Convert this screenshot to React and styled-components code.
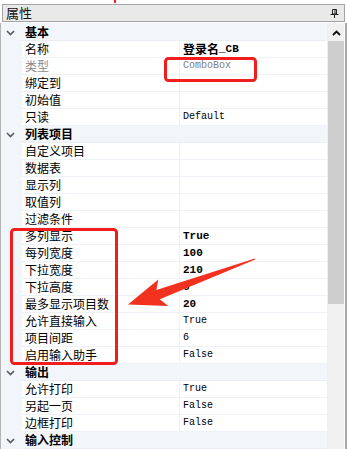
import React from "react";
import styled, { createGlobalStyle } from "styled-components";

const GlobalStyle = createGlobalStyle`
  html, body {
    margin: 0;
    padding: 0;
    background: #ffffff;
    font-family: "Noto Sans CJK SC", "Liberation Sans", sans-serif;
  }
`;

const Page = styled.div`
  position: relative;
  width: 347px;
  height: 449px;
  overflow: hidden;
  background: #ffffff;
  display: flex;
  flex-direction: column;
`;

const TopGap = styled.div`
  height: 4px;
`;

const Header = styled.div`
  box-sizing: border-box;
  height: 18px;
  margin: 0 2px;
  border: 1px solid #a3a3a3;
  background: #e9e9e9;
  display: flex;
  align-items: center;
  justify-content: space-between;
  padding: 0 5px 0 3px;
  font-size: 13px;
  line-height: 16px;
  color: #111;
`;

const Body = styled.div`
  flex: 1;
  display: flex;
  margin-top: 1px;
  border-left: 1px solid #b4b4b4;
  border-right: 2px solid #a8a8a8;
  padding-top: 1px;
  background: #f2f5fa;
`;

const Grid = styled.div`
  flex: 1;
  display: flex;
  flex-direction: column;
`;

const Row = styled.div`
  display: grid;
  grid-template-columns: 21px 158px 1fr;
  height: 17px;
  flex-shrink: 0;
  background: #f2f5fa;
`;

const Gutter = styled.div`
  display: flex;
  align-items: center;
  justify-content: center;
  padding-right: 2px;
`;

const GroupTitle = styled.div`
  grid-column: 2 / 4;
  box-sizing: border-box;
  height: 17px;
  padding-left: 3px;
  display: flex;
  align-items: center;
  font-size: 12px;
  font-weight: 700;
  line-height: 14px;
  color: #000;
  border-bottom: 1px solid #e9edf4;
`;

const Name = styled.div`
  box-sizing: border-box;
  height: 17px;
  background: #ffffff;
  padding-left: 3px;
  display: flex;
  align-items: center;
  font-size: 12px;
  line-height: 14px;
  color: ${(p) => (p.$readonly ? "#8a8a8a" : "#000")};
  border-bottom: 1px solid #eef1f6;
  border-right: 1px solid #eef1f6;
  white-space: nowrap;
`;

const Value = styled.div`
  box-sizing: border-box;
  height: 17px;
  background: #ffffff;
  padding-left: 3px;
  display: flex;
  align-items: center;
  font-family: "Liberation Mono", "Noto Sans CJK SC", monospace;
  font-size: ${(p) => (p.$bold ? "11px" : "10px")};
  font-weight: ${(p) => (p.$bold ? 700 : 400)};
  line-height: 14px;
  color: ${(p) => (p.$readonly ? "#808080" : "#000")};
  border-bottom: 1px solid #eef1f6;
  white-space: nowrap;
`;

const Cjk = styled.span`
  font-family: "Noto Sans CJK SC", sans-serif;
  font-size: 12px;
`;

const Scrollbar = styled.div`
  width: 17px;
  display: flex;
  flex-direction: column;
  background: #f0f0f0;
  border-right: 1px solid #ffffff;
`;

const ScrollUp = styled.div`
  height: 17px;
  display: flex;
  align-items: center;
  justify-content: center;
  padding-left: 1px;
`;

const Thumb = styled.div`
  height: ${(p) => p.$size}px;
  margin-left: 1px;
  background: #cdcdcd;
`;

const Overlay = styled.svg`
  position: absolute;
  left: 0;
  top: 0;
  width: 347px;
  height: 449px;
  pointer-events: none;
`;

const Chevron = () => (
  <svg width="9" height="6" viewBox="0 0 9 6">
    <path d="M1 1 L4.5 4.5 L8 1" fill="none" stroke="#5a5a5a" strokeWidth="1.6" />
  </svg>
);

const Pin = () => (
  <svg width="9" height="9" viewBox="0 0 9 9">
    <path d="M2.5 0.5 H6.5 V5 H2.5 Z" fill="none" stroke="#222" strokeWidth="1" />
    <path d="M5 0.5 V5" stroke="#222" strokeWidth="1" />
    <path d="M0.5 5.5 H8.5" stroke="#222" strokeWidth="1" />
    <path d="M4.5 5.5 V9" stroke="#222" strokeWidth="1" />
  </svg>
);

const Caret = () => (
  <svg width="9" height="6" viewBox="0 0 9 6">
    <path d="M1 5 L4.5 1.5 L8 5" fill="none" stroke="#111" strokeWidth="1.8" />
  </svg>
);

const sections = [
  {
    title: "基本",
    items: [
      { name: "名称", value: <><Cjk>登录名</Cjk>_CB</>, bold: true },
      { name: "类型", value: "ComboBox", readonly: true },
      { name: "绑定到" },
      { name: "初始值" },
      { name: "只读", value: "Default" },
    ],
  },
  {
    title: "列表项目",
    items: [
      { name: "自定义项目" },
      { name: "数据表" },
      { name: "显示列" },
      { name: "取值列" },
      { name: "过滤条件" },
      { name: "多列显示", value: "True", bold: true },
      { name: "每列宽度", value: "100", bold: true },
      { name: "下拉宽度", value: "210", bold: true },
      { name: "下拉高度", value: "8", bold: true },
      { name: "最多显示项目数", value: "20", bold: true },
      { name: "允许直接输入", value: "True" },
      { name: "项目间距", value: "6" },
      { name: "启用输入助手", value: "False" },
    ],
  },
  {
    title: "输出",
    items: [
      { name: "允许打印", value: "True" },
      { name: "另起一页", value: "False" },
      { name: "边框打印", value: "False" },
    ],
  },
  { title: "输入控制", items: [] },
];

// arrow geometry: tail -> tip
const arrow =
  "255.2,259.5 159.8,299.3 168.3,306 128,304.5 158.3,279.6 156.4,289.9 254.8,258.5";

export default function App() {
  return (
    <>
      <GlobalStyle />
      <Page>
        <TopGap />
        <Header>
          <span>属性</span>
          <Pin />
        </Header>
        <Body>
          <Grid>
            {sections.map((s) => (
              <React.Fragment key={s.title}>
                <Row>
                  <Gutter>
                    <Chevron />
                  </Gutter>
                  <GroupTitle>{s.title}</GroupTitle>
                </Row>
                {s.items.map((it) => (
                  <Row key={it.name}>
                    <Gutter />
                    <Name $readonly={it.readonly}>{it.name}</Name>
                    <Value $bold={it.bold} $readonly={it.readonly}>
                      {it.value}
                    </Value>
                  </Row>
                ))}
              </React.Fragment>
            ))}
          </Grid>
          <Scrollbar>
            <ScrollUp>
              <Caret />
            </ScrollUp>
            <Thumb $size={263} />
          </Scrollbar>
        </Body>
        <Overlay viewBox="0 0 347 449">
          <rect x="114" y="0" width="2" height="3" fill="#ff1a1a" />
          <rect x="165.5" y="58.5" width="90" height="22" rx="3" fill="none" stroke="#f21d1d" strokeWidth="3" />
          <rect x="11.5" y="229.5" width="105" height="134" rx="3" fill="none" stroke="#f21d1d" strokeWidth="3" />
          <polygon points={arrow} fill="#f2321f" />
        </Overlay>
      </Page>
    </>
  );
}
